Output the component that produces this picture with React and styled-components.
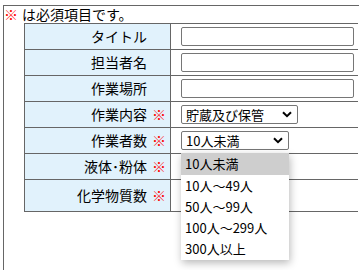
import React from "react";
import styled, { createGlobalStyle } from "styled-components";

const GlobalStyle = createGlobalStyle`
  html, body {
    margin: 0;
    padding: 0;
    background: #fff;
    overflow: hidden;
  }
  body {
    font-family: "Noto Sans CJK JP", "Noto Sans", sans-serif;
    color: #000;
  }
`;

const Frame = styled.div`
  box-sizing: border-box;
  margin: 5px 0 0 3px;
  width: 356px;
  height: 265px;
  border-top: 1px solid #666;
  border-left: 1px solid #666;
`;

const Note = styled.div`
  display: flex;
  align-items: center;
  height: 17px;
  font-size: 14px;
  line-height: 17px;
`;

const RedMark = styled.span`
  color: #f00;
  font-size: 14px;
  margin-right: ${(p) => (p.$gap ? 4 : 0)}px;
`;

const FormTable = styled.table`
  margin-left: 20px;
  border-collapse: collapse;
  table-layout: fixed;
  width: 334px;
`;

const LabelCell = styled.th`
  width: 141px;
  height: ${(p) => (p.$tall ? 31 : 25)}px;
  padding: 0 4px 0 0;
  background: #e1f2fc;
  border: 1px solid #666;
  font-weight: normal;
  font-size: 14px;
  line-height: 17px;
  text-align: right;
  white-space: nowrap;
`;

const MarkSlot = styled.span`
  display: inline-block;
  width: 14px;
  margin-left: 5px;
  color: #f00;
  text-align: left;
`;

const ValueCell = styled.td`
  padding: 0 0 0 10px;
  border: 1px solid #666;
  border-right: none;
  background: #fff;
  vertical-align: middle;
`;

const TextInput = styled.input`
  display: block;
  box-sizing: border-box;
  width: 173px;
  height: 19px;
  margin: 0;
  padding: 0 3px;
  border: 1px solid #767676;
  border-radius: 2px;
  font-size: 13px;
`;

const SelectBox = styled.div`
  position: relative;
  width: ${(p) => p.$w}px;
`;

const NativeSelect = styled.select`
  appearance: none;
  -webkit-appearance: none;
  display: block;
  box-sizing: border-box;
  width: 100%;
  height: 19px;
  margin: 0;
  padding: 0 20px 0 4px;
  border: 1px solid #767676;
  border-radius: 2px;
  background: #fff;
  color: #000;
  font-family: "Noto Sans CJK JP", sans-serif;
  font-size: 13px;
  line-height: 17px;
`;

const Chevron = styled.svg`
  position: absolute;
  right: 6px;
  top: 6px;
  width: 10px;
  height: 7px;
  pointer-events: none;
`;

const OptionList = styled.ul`
  position: absolute;
  top: 22px;
  left: 0;
  z-index: 5;
  width: 108px;
  margin: 0;
  padding: 0 0 1px;
  list-style: none;
  background: #fff;
  box-shadow: 1px 3px 8px rgba(0, 0, 0, 0.28);
  font-family: "Noto Sans CJK JP", sans-serif;
  font-size: 13px;
`;

const OptionItem = styled.li`
  height: ${(p) => (p.$first ? 22 : 21)}px;
  line-height: ${(p) => (p.$first ? 22 : 21)}px;
  padding-left: 4px;
  background: ${(p) => (p.$active ? "#cecece" : "#fff")};
  white-space: nowrap;
`;

const ChevronIcon = () => (
  <Chevron viewBox="0 0 10 7">
    <path d="M1 1.2 L5 5.2 L9 1.2" fill="none" stroke="#000" strokeWidth="2" />
  </Chevron>
);

const Select = ({ width, value, options = [value], open, items }) => (
  <SelectBox $w={width}>
    <NativeSelect defaultValue={value}>
      {options.map((o) => (
        <option key={o}>{o}</option>
      ))}
    </NativeSelect>
    <ChevronIcon />
    {open ? (
      <OptionList>
        {items.map((o, i) => (
          <OptionItem key={o} $first={i === 0} $active={o === value}>
            {o}
          </OptionItem>
        ))}
      </OptionList>
    ) : null}
  </SelectBox>
);

const Label = ({ children, required, tall }) => (
  <LabelCell $tall={tall}>
    {children}
    <MarkSlot>{required ? "※" : ""}</MarkSlot>
  </LabelCell>
);

const workerCounts = ["10人未満", "10人～49人", "50人～99人", "100人～299人", "300人以上"];

export default function App() {
  return (
    <>
      <GlobalStyle />
      <Frame>
        <Note>
          <RedMark $gap>※</RedMark>は必須項目です。
        </Note>
        <FormTable>
          <tbody>
            <tr>
              <Label>タイトル</Label>
              <ValueCell>
                <TextInput />
              </ValueCell>
            </tr>
            <tr>
              <Label>担当者名</Label>
              <ValueCell>
                <TextInput />
              </ValueCell>
            </tr>
            <tr>
              <Label>作業場所</Label>
              <ValueCell>
                <TextInput />
              </ValueCell>
            </tr>
            <tr>
              <Label required>作業内容</Label>
              <ValueCell>
                <Select width={117} value="貯蔵及び保管" />
              </ValueCell>
            </tr>
            <tr>
              <Label required>作業者数</Label>
              <ValueCell>
                <Select width={108} value="10人未満" options={workerCounts} items={workerCounts} open />
              </ValueCell>
            </tr>
            <tr>
              <Label required>液体･粉体</Label>
              <ValueCell />
            </tr>
            <tr>
              <Label required tall>化学物質数</Label>
              <ValueCell />
            </tr>
          </tbody>
        </FormTable>
      </Frame>
    </>
  );
}
